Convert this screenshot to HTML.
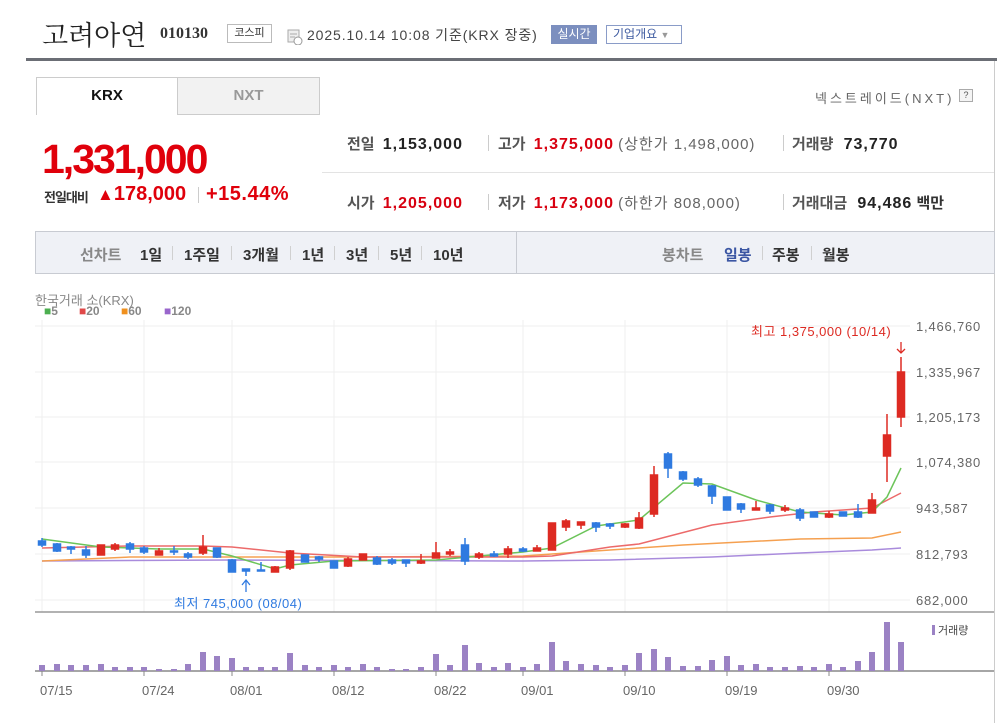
<!DOCTYPE html>
<html><head><meta charset="utf-8"><style>
*{margin:0;padding:0;box-sizing:border-box}
body{width:997px;height:723px;background:#fff;position:relative;overflow:hidden;font-family:"Liberation Sans","Noto Sans CJK KR",sans-serif}
.a{position:absolute;white-space:nowrap}
.b{font-weight:bold}
.v{letter-spacing:1px}
.p{position:absolute;top:244px;font-size:15px;font-weight:bold;color:#333;white-space:nowrap}
.s{position:absolute;top:246px;width:1px;height:14px;background:#d0d0d0}
</style></head><body>
<div class="a" style="left:42px;top:14px;font-family:'Liberation Serif','Noto Serif CJK SC',serif;font-size:27px;color:#222">고려아연</div>
<div class="a b" style="left:160px;top:25px;font-family:'Liberation Serif',serif;font-size:16px;color:#333">010130</div>
<div class="a" style="left:227px;top:24px;width:45px;height:19px;border:1px solid #bbb;font-size:11px;color:#333;text-align:center;line-height:17px">코스피</div>
<svg class="a" style="left:287px;top:29px" width="16" height="16"><rect x="1" y="1" width="11" height="12" fill="#eee" stroke="#aaa"/><line x1="3" y1="5" x2="10" y2="5" stroke="#aaa"/><line x1="3" y1="8" x2="8" y2="8" stroke="#aaa"/><circle cx="11" cy="12" r="4" fill="#fff" stroke="#999"/></svg>
<div class="a" style="left:307px;top:25px;font-size:14px;color:#444;letter-spacing:0.9px">2025.10.14 10:08 기준(KRX 장중)</div>
<div class="a" style="left:551px;top:25px;width:46px;height:19px;background:#7c8fbf;color:#fff;font-size:12px;text-align:center;line-height:19px">실시간</div>
<div class="a" style="left:606px;top:25px;width:76px;height:19px;border:1px solid #8a9cc8;color:#3d5aa0;font-size:12px;padding-left:6px;line-height:17px">기업개요 <span style="color:#999;font-size:9px">▼</span></div>
<div class="a" style="left:26px;top:58px;width:971px;height:3px;background:#6b6e75"></div>
<div class="a" style="left:994px;top:61px;width:1px;height:662px;background:#ccc"></div>
<div class="a b" style="left:36px;top:77px;width:142px;height:38px;border:1px solid #ccc;border-bottom:none;font-size:15px;color:#111;text-align:center;line-height:36px">KRX</div>
<div class="a b" style="left:177px;top:77px;width:143px;height:38px;border:1px solid #ccc;background:#f2f2f2;font-size:15px;color:#999;text-align:center;line-height:36px">NXT</div>
<div class="a" style="left:815px;top:88px;font-size:13px;color:#666;letter-spacing:3px">넥스트레이드(NXT)</div>
<div class="a" style="left:959px;top:89px;width:14px;height:13px;border:1px solid #aaa;background:#f4f4f4;font-size:9px;text-align:center;line-height:11px;color:#555">?</div>
<div class="a b" style="left:42px;top:136px;font-size:41px;color:#e0000b;letter-spacing:-2px">1,331,000</div>
<div class="a b" style="left:44px;top:187px;font-size:13px;color:#333;letter-spacing:-1px">전일대비</div>
<div class="a b" style="left:97px;top:183px;font-size:20px;color:#e0000b"><span style="font-size:17px">▲</span>178,000</div>
<div class="a" style="left:198px;top:187px;width:1px;height:16px;background:#ccc"></div>
<div class="a b" style="left:206px;top:183px;font-size:20px;color:#e0000b;letter-spacing:0.5px">+15.44%</div>
<div class="a" style="left:322px;top:172px;width:672px;height:1px;background:#e3e3e3"></div>
<div class="a b" style="left:347px;top:133px;font-size:15px;color:#555">전일 <span class="v" style="color:#222;margin-left:4px;font-size:16px">1,153,000</span></div>
<div class="a b" style="left:347px;top:192px;font-size:15px;color:#555">시가 <span class="v" style="color:#d80010;margin-left:4px;font-size:16px">1,205,000</span></div>
<div class="a" style="left:488px;top:135px;width:1px;height:16px;background:#ccc"></div>
<div class="a" style="left:488px;top:194px;width:1px;height:16px;background:#ccc"></div>
<div class="a b" style="left:498px;top:133px;font-size:15px;color:#555">고가 <span class="v" style="color:#d80010;margin-left:4px;font-size:16px">1,375,000</span> <span class="v" style="font-weight:normal;color:#666">(상한가 1,498,000)</span></div>
<div class="a b" style="left:498px;top:192px;font-size:15px;color:#555">저가 <span class="v" style="color:#d80010;margin-left:4px;font-size:16px">1,173,000</span> <span class="v" style="font-weight:normal;color:#666">(하한가 808,000)</span></div>
<div class="a" style="left:783px;top:135px;width:1px;height:16px;background:#ccc"></div>
<div class="a" style="left:783px;top:194px;width:1px;height:16px;background:#ccc"></div>
<div class="a b" style="left:792px;top:133px;font-size:15px;color:#555">거래량 <span class="v" style="color:#222;margin-left:6px;font-size:16px">73,770</span></div>
<div class="a b" style="left:792px;top:192px;font-size:15px;color:#555">거래대금 <span class="v" style="color:#222;margin-left:6px;font-size:16px">94,486</span> <span style="color:#333">백만</span></div>
<div class="a" style="left:35px;top:231px;width:960px;height:43px;background:#eff1f6;border:1px solid #c8cbd2"></div>
<div class="a" style="left:516px;top:232px;width:1px;height:41px;background:#c8cbd2"></div>
<div class="p" style="left:80px;color:#888">선차트</div>
<div class="p" style="left:140px">1일</div><div class="s" style="left:172px"></div>
<div class="p" style="left:184px">1주일</div><div class="s" style="left:231px"></div>
<div class="p" style="left:243px">3개월</div><div class="s" style="left:290px"></div>
<div class="p" style="left:302px">1년</div><div class="s" style="left:334px"></div>
<div class="p" style="left:346px">3년</div><div class="s" style="left:378px"></div>
<div class="p" style="left:390px">5년</div><div class="s" style="left:421px"></div>
<div class="p" style="left:433px">10년</div>
<div class="p" style="left:662px;color:#888">봉차트</div>
<div class="p" style="left:724px;color:#3b56a3">일봉</div><div class="s" style="left:762px"></div>
<div class="p" style="left:772px">주봉</div><div class="s" style="left:811px"></div>
<div class="p" style="left:822px">월봉</div>
<div class="a" style="left:35px;top:290px;font-size:13px;color:#888">한국거래 소(KRX)</div>
<div class="a b" style="left:44px;top:304px;font-size:12px;color:#888"><span style="color:#4caf50">■</span>5</div>
<div class="a b" style="left:79px;top:304px;font-size:12px;color:#888"><span style="color:#e04848">■</span>20</div>
<div class="a b" style="left:121px;top:304px;font-size:12px;color:#888"><span style="color:#f0901e">■</span>60</div>
<div class="a b" style="left:164px;top:304px;font-size:12px;color:#888"><span style="color:#9966cc">■</span>120</div>
<svg class="a" style="left:0;top:0" width="997" height="723" font-family="Liberation Sans, Noto Sans CJK KR, sans-serif">
<g stroke="#efefef" stroke-width="1">
<line x1="35" y1="326" x2="910" y2="326"/><line x1="35" y1="372" x2="910" y2="372"/><line x1="35" y1="417" x2="910" y2="417"/><line x1="35" y1="462" x2="910" y2="462"/><line x1="35" y1="508" x2="910" y2="508"/><line x1="35" y1="554" x2="910" y2="554"/><line x1="35" y1="600" x2="910" y2="600"/>
<line x1="42" y1="320" x2="42" y2="612"/><line x1="144" y1="320" x2="144" y2="612"/><line x1="232" y1="320" x2="232" y2="612"/><line x1="334" y1="320" x2="334" y2="612"/><line x1="436" y1="320" x2="436" y2="612"/><line x1="523" y1="320" x2="523" y2="612"/><line x1="625" y1="320" x2="625" y2="612"/><line x1="727" y1="320" x2="727" y2="612"/><line x1="829" y1="320" x2="829" y2="612"/>
</g>
<line x1="35" y1="612" x2="994" y2="612" stroke="#999" stroke-width="1.5"/>
<line x1="35" y1="671" x2="994" y2="671" stroke="#888" stroke-width="1.5"/>
<g stroke="#888"><line x1="42" y1="671" x2="42" y2="676"/><line x1="144" y1="671" x2="144" y2="676"/><line x1="232" y1="671" x2="232" y2="676"/><line x1="334" y1="671" x2="334" y2="676"/><line x1="436" y1="671" x2="436" y2="676"/><line x1="523" y1="671" x2="523" y2="676"/><line x1="625" y1="671" x2="625" y2="676"/><line x1="727" y1="671" x2="727" y2="676"/><line x1="829" y1="671" x2="829" y2="676"/></g>
<g font-size="13" fill="#666" letter-spacing="0.8">
<text x="916" y="331">1,466,760</text><text x="916" y="377">1,335,967</text><text x="916" y="422">1,205,173</text><text x="916" y="467">1,074,380</text><text x="916" y="513">943,587</text><text x="916" y="559">812,793</text><text x="916" y="605">682,000</text>
</g>
<g font-size="13" fill="#666">
<text x="40" y="695">07/15</text><text x="142" y="695">07/24</text><text x="230" y="695">08/01</text><text x="332" y="695">08/12</text><text x="434" y="695">08/22</text><text x="521" y="695">09/01</text><text x="623" y="695">09/10</text><text x="725" y="695">09/19</text><text x="827" y="695">09/30</text>
</g>
<g fill="none" stroke-width="1.5">
<polyline stroke="#a98bdc" points="42,561 232,560 523,561 610,560 712,557 800,553 872,550 901,548"/>
<polyline stroke="#f5a050" points="42,561 130,557 232,557 363,557 523,556 610,550 683,545 800,539 872,538 901,532"/>
<polyline stroke="#ec6a6a" points="42,548 130,546 203,546 232,547 290,553 363,557 436,557 523,557 552,556 610,547 639,544 712,525 770,517 814,512 872,508 901,493"/>
<polyline stroke="#6cc45a" points="42,539 101,547 159,549 203,549 232,556 275,569 290,565 334,561 436,560 523,552 552,548 596,526 639,520 683,483 712,484 756,500 800,512 843,515 872,512 887,497 901,468"/>
</g>
<g stroke-width="1.5">
<g stroke="#2f7ae0" fill="#2f7ae0">
<line x1="42" y1="538" x2="42" y2="547"/><rect x="38.5" y="541" width="7" height="4"/>
<line x1="57" y1="543" x2="57" y2="552"/><rect x="53.5" y="544" width="7" height="7"/>
<line x1="71" y1="546" x2="71" y2="554"/><rect x="67.5" y="547" width="7" height="2"/>
<line x1="86" y1="546" x2="86" y2="558"/><rect x="82.5" y="550" width="7" height="5"/>
<line x1="130" y1="542" x2="130" y2="553"/><rect x="126.5" y="544" width="7" height="5"/>
<line x1="144" y1="546" x2="144" y2="554"/><rect x="140.5" y="548" width="7" height="4"/>
<line x1="174" y1="546" x2="174" y2="555"/><rect x="170.5" y="551" width="7" height="1"/>
<line x1="188" y1="552" x2="188" y2="559"/><rect x="184.5" y="554" width="7" height="3"/>
<line x1="217" y1="548" x2="217" y2="558"/><rect x="213.5" y="548" width="7" height="9"/>
<line x1="232" y1="559" x2="232" y2="572"/><rect x="228.5" y="560" width="7" height="12"/>
<line x1="246" y1="569" x2="246" y2="576"/><rect x="242.5" y="569" width="7" height="2"/>
<line x1="261" y1="562" x2="261" y2="571"/><rect x="257.5" y="570" width="7" height="1"/>
<line x1="305" y1="555" x2="305" y2="562"/><rect x="301.5" y="555" width="7" height="7"/>
<line x1="319" y1="556" x2="319" y2="562"/><rect x="315.5" y="557" width="7" height="2"/>
<line x1="334" y1="561" x2="334" y2="568"/><rect x="330.5" y="561" width="7" height="7"/>
<line x1="377" y1="556" x2="377" y2="565"/><rect x="373.5" y="558" width="7" height="6"/>
<line x1="392" y1="558" x2="392" y2="565"/><rect x="388.5" y="560" width="7" height="3"/>
<line x1="406" y1="560" x2="406" y2="567"/><rect x="402.5" y="560" width="7" height="3"/>
<line x1="465" y1="538" x2="465" y2="565"/><rect x="461.5" y="545" width="7" height="16"/>
<line x1="494" y1="551" x2="494" y2="557"/><rect x="490.5" y="554" width="7" height="2"/>
<line x1="523" y1="547" x2="523" y2="552"/><rect x="519.5" y="549" width="7" height="2"/>
<line x1="596" y1="522" x2="596" y2="532"/><rect x="592.5" y="523" width="7" height="4"/>
<line x1="610" y1="523" x2="610" y2="529"/><rect x="606.5" y="524" width="7" height="2"/>
<line x1="668" y1="452" x2="668" y2="478"/><rect x="664.5" y="454" width="7" height="14"/>
<line x1="683" y1="471" x2="683" y2="481"/><rect x="679.5" y="472" width="7" height="7"/>
<line x1="698" y1="477" x2="698" y2="487"/><rect x="694.5" y="479" width="7" height="6"/>
<line x1="712" y1="485" x2="712" y2="504"/><rect x="708.5" y="486" width="7" height="10"/>
<line x1="727" y1="497" x2="727" y2="510"/><rect x="723.5" y="497" width="7" height="13"/>
<line x1="741" y1="503" x2="741" y2="513"/><rect x="737.5" y="504" width="7" height="5"/>
<line x1="770" y1="504" x2="770" y2="514"/><rect x="766.5" y="505" width="7" height="6"/>
<line x1="800" y1="508" x2="800" y2="521"/><rect x="796.5" y="510" width="7" height="8"/>
<line x1="814" y1="512" x2="814" y2="517"/><rect x="810.5" y="512" width="7" height="5"/>
<line x1="843" y1="512" x2="843" y2="516"/><rect x="839.5" y="512" width="7" height="4"/>
<line x1="858" y1="504" x2="858" y2="518"/><rect x="854.5" y="512" width="7" height="5"/>
</g>
<g stroke="#dd2a22" fill="#dd2a22">
<rect x="97.5" y="545" width="7" height="10"/>
<line x1="115" y1="543" x2="115" y2="551"/><rect x="111.5" y="545" width="7" height="4"/>
<line x1="159" y1="548" x2="159" y2="555"/><rect x="155.5" y="551" width="7" height="4"/>
<line x1="203" y1="535" x2="203" y2="555"/><rect x="199.5" y="547" width="7" height="6"/>
<line x1="275" y1="566" x2="275" y2="572"/><rect x="271.5" y="567" width="7" height="5"/>
<line x1="290" y1="550" x2="290" y2="570"/><rect x="286.5" y="551" width="7" height="17"/>
<line x1="348" y1="557" x2="348" y2="567"/><rect x="344.5" y="559" width="7" height="7"/>
<rect x="359.5" y="554" width="7" height="6"/>
<line x1="421" y1="554" x2="421" y2="564"/><rect x="417.5" y="561" width="7" height="2"/>
<line x1="436" y1="542" x2="436" y2="558"/><rect x="432.5" y="553" width="7" height="5"/>
<line x1="450" y1="549" x2="450" y2="556"/><rect x="446.5" y="552" width="7" height="2"/>
<line x1="479" y1="552" x2="479" y2="559"/><rect x="475.5" y="554" width="7" height="3"/>
<line x1="508" y1="546" x2="508" y2="558"/><rect x="504.5" y="549" width="7" height="5"/>
<line x1="537" y1="545" x2="537" y2="551"/><rect x="533.5" y="548" width="7" height="3"/>
<rect x="548.5" y="523" width="7" height="27"/>
<line x1="566" y1="519" x2="566" y2="531"/><rect x="562.5" y="521" width="7" height="6"/>
<line x1="581" y1="522" x2="581" y2="529"/><rect x="577.5" y="522" width="7" height="3"/>
<line x1="625" y1="523" x2="625" y2="528"/><rect x="621.5" y="524" width="7" height="3"/>
<line x1="639" y1="512" x2="639" y2="529"/><rect x="635.5" y="518" width="7" height="10"/>
<line x1="654" y1="466" x2="654" y2="517"/><rect x="650.5" y="475" width="7" height="39"/>
<line x1="756" y1="501" x2="756" y2="510"/><rect x="752.5" y="508" width="7" height="2"/>
<line x1="785" y1="505" x2="785" y2="512"/><rect x="781.5" y="508" width="7" height="2"/>
<line x1="829" y1="511" x2="829" y2="518"/><rect x="825.5" y="514" width="7" height="3"/>
<line x1="872" y1="493" x2="872" y2="513"/><rect x="868.5" y="500" width="7" height="13"/>
<line x1="887" y1="414" x2="887" y2="482"/><rect x="883.5" y="435" width="7" height="21"/>
<line x1="901" y1="357" x2="901" y2="427"/><rect x="897.5" y="372" width="7" height="45"/>
</g>
</g>
<g stroke="#2f7ae0" stroke-width="1.3" fill="none"><line x1="246" y1="581" x2="246" y2="592"/><polyline points="242,585 246,580 250,585"/></g>
<text x="174" y="608" font-size="13" fill="#2f7ae0" letter-spacing="0.5">최저 745,000 (08/04)</text>
<g stroke="#dd2a22" stroke-width="1.3" fill="none"><line x1="901" y1="342" x2="901" y2="353"/><polyline points="897,349 901,353 905,349"/></g>
<text x="751" y="336" font-size="13" fill="#dd2a22" letter-spacing="0.5">최고 1,375,000 (10/14)</text>
<g fill="#9b82c4">
<rect x="39" y="665" width="6" height="6"/><rect x="54" y="664" width="6" height="7"/><rect x="68" y="665" width="6" height="6"/><rect x="83" y="665" width="6" height="6"/><rect x="98" y="664" width="6" height="7"/><rect x="112" y="667" width="6" height="4"/><rect x="127" y="667" width="6" height="4"/><rect x="141" y="667" width="6" height="4"/><rect x="156" y="669" width="6" height="2"/><rect x="171" y="669" width="6" height="2"/><rect x="185" y="664" width="6" height="7"/><rect x="200" y="652" width="6" height="19"/><rect x="214" y="656" width="6" height="15"/><rect x="229" y="658" width="6" height="13"/><rect x="243" y="667" width="6" height="4"/><rect x="258" y="667" width="6" height="4"/><rect x="272" y="667" width="6" height="4"/><rect x="287" y="653" width="6" height="18"/><rect x="302" y="665" width="6" height="6"/><rect x="316" y="667" width="6" height="4"/><rect x="331" y="665" width="6" height="6"/><rect x="345" y="667" width="6" height="4"/><rect x="360" y="664" width="6" height="7"/><rect x="374" y="667" width="6" height="4"/><rect x="389" y="669" width="6" height="2"/><rect x="403" y="669" width="6" height="2"/><rect x="418" y="667" width="6" height="4"/><rect x="433" y="654" width="6" height="17"/><rect x="447" y="665" width="6" height="6"/><rect x="462" y="645" width="6" height="26"/><rect x="476" y="663" width="6" height="8"/><rect x="491" y="667" width="6" height="4"/><rect x="505" y="663" width="6" height="8"/><rect x="520" y="667" width="6" height="4"/><rect x="534" y="664" width="6" height="7"/><rect x="549" y="642" width="6" height="29"/><rect x="563" y="661" width="6" height="10"/><rect x="578" y="664" width="6" height="7"/><rect x="593" y="665" width="6" height="6"/><rect x="607" y="667" width="6" height="4"/><rect x="622" y="665" width="6" height="6"/><rect x="636" y="653" width="6" height="18"/><rect x="651" y="649" width="6" height="22"/><rect x="665" y="657" width="6" height="14"/><rect x="680" y="666" width="6" height="5"/><rect x="695" y="666" width="6" height="5"/><rect x="709" y="660" width="6" height="11"/><rect x="724" y="656" width="6" height="15"/><rect x="738" y="665" width="6" height="6"/><rect x="753" y="664" width="6" height="7"/><rect x="767" y="667" width="6" height="4"/><rect x="782" y="667" width="6" height="4"/><rect x="797" y="666" width="6" height="5"/><rect x="811" y="667" width="6" height="4"/><rect x="826" y="664" width="6" height="7"/><rect x="840" y="667" width="6" height="4"/><rect x="855" y="661" width="6" height="10"/><rect x="869" y="652" width="6" height="19"/><rect x="884" y="622" width="6" height="49"/><rect x="898" y="642" width="6" height="29"/>
<rect x="932" y="625" width="3" height="10"/>
</g>
<text x="938" y="634" font-size="11" fill="#444">거래량</text>
</svg>
</body></html>
